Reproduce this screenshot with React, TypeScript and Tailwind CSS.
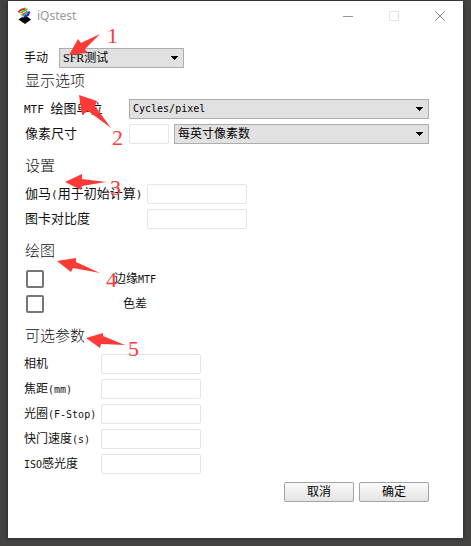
import { ReactNode } from 'react'

interface SelectProps {
    id: string;
    label?: string;
    value: string;
    className: string;
}

interface RowProps {
    id: string;
    label: ReactNode;
    labelWidth: string;
}

const ARROWS = [
    '69,55 78,39 81,43 100,34 85,49 87,53',
    '79,95 97,101 95,106 111,128 88,111 82,115',
    '65,182 82,174 82,179 106,182 82,186 81,190',
    '57,261 76,258 76,262 100,273 73,268 71,272',
    '86,338 103,333 103,336 125,345 101,344 100,348',
]

const NUMBERS = [
    { n: 1, x: 107, y: 43 },
    { n: 2, x: 112, y: 145 },
    { n: 3, x: 110, y: 195 },
    { n: 4, x: 106, y: 287 },
    { n: 5, x: 128, y: 356 },
]

function Latin({ children }: { children: ReactNode }) {
    return <span className="font-['DejaVu_Sans_Mono',monospace] text-[10px]">{children}</span>
}

function LargeLatin({ children }: { children: ReactNode }) {
    return <span className="font-['DejaVu_Sans_Mono',monospace] text-[11px]">{children}</span>
}

function Heading({ children }: { children: ReactNode }) {
    return <h2 className="pl-px text-[15px] leading-5 font-light text-[#111]">{children}</h2>
}

function Select({ id, label, value, className }: SelectProps) {
    return (
        <div className={`relative h-5 ${className}`}>
            <select id={id} aria-label={label} defaultValue={value} className="block h-5 w-full appearance-none border border-[#adadad] bg-[#e1e1e1] pl-[3px] pr-5 leading-4 text-black outline-none">
                <option>{value}</option>
            </select>
            <svg className="pointer-events-none absolute right-[6px] top-2 h-1 w-[7px]" viewBox="0 0 7 4" shapeRendering="crispEdges">
                <path d="M0 0h7v1H6v1H5v1H4v1H3V3H2V2H1V1H0z" fill="#000" />
            </svg>
        </div>
    )
}

function InputRow({ id, label, labelWidth }: RowProps) {
    return (
        <div className="flex h-5 items-center">
            <label htmlFor={id} className={`shrink-0 whitespace-nowrap ${labelWidth}`}>{label}</label>
            <input id={id} type="text" className="h-5 w-[100px] rounded-[2px] border border-[#e5e5e5] bg-white px-1 outline-none" />
        </div>
    )
}

function CheckRow({ id, label }: { id: string; label: ReactNode }) {
    return (
        <div className="flex h-5 items-center gap-10 pl-[2px]">
            <input id={id} type="checkbox" className="size-[18px] shrink-0 appearance-none rounded-[2px] border-2 border-[#767676] bg-white" />
            <label htmlFor={id} className="w-[102px] text-center">{label}</label>
        </div>
    )
}

function TitleBar() {
    return (
        <header className="flex h-[29px] items-center pl-[9px]">
            <svg className="size-[18px]" viewBox="0 0 18 18" fill="none">
                <path d="M8 8 14 12.500 8 17 1.500 12.500z" fill="#000" />
                <path d="M5.500 10 12.500 5.500" stroke="#fff" strokeWidth="1.500" />
                <path d="M1.500 5.500 3.500 3 8.500 1.500" stroke="#f22" strokeWidth="2" />
                <path d="M3.500 6 6 4.500 10.500 2" stroke="#1d3" strokeWidth="1.800" />
                <path d="M4.500 8 7.500 6.500 10.500 4" stroke="#f33" strokeWidth="1.500" />
                <path d="M5.500 9 9.500 7 11.500 5" stroke="#1d3" strokeWidth="1.500" />
                <path d="M7 9.800 11 8 12.500 4.500" stroke="#22f" strokeWidth="2" />
            </svg>
            <h1 className="ml-[2px] flex-1 font-['Noto_Sans',sans-serif] text-xs text-[#999]">iQstest</h1>
            <button aria-label="最小化" className="flex h-[29px] w-[46px] items-center justify-center">
                <svg className="size-[10px]" viewBox="0 0 10 10" shapeRendering="crispEdges">
                    <path d="M0 5h10v1H0z" fill="#999" />
                </svg>
            </button>
            <button aria-label="最大化" className="flex h-[29px] w-[46px] items-center justify-center">
                <svg className="size-[10px]" viewBox="0 0 10 10" fill="none">
                    <path d="M.5.5h9v9h-9z" stroke="#e3e3e3" />
                </svg>
            </button>
            <button aria-label="关闭" className="flex h-[29px] w-[46px] items-center justify-center">
                <svg className="size-[10px]" viewBox="0 0 10 10" fill="none">
                    <path d="m0 0 10 10M10 0 0 10" stroke="#888" />
                </svg>
            </button>
        </header>
    )
}

function Annotations() {
    return (
        <svg className="pointer-events-none absolute left-0 top-0 h-[370px] w-[150px]" viewBox="0 0 150 370">
            {ARROWS.map((points) => <polygon key={points} points={points} fill="#fd3a38" />)}
            {NUMBERS.map(({ n, x, y }) => (
                <text key={n} x={x} y={y} fill="#fd3a38" className="font-['Liberation_Serif',serif] text-[22px]">{n}</text>
            ))}
        </svg>
    )
}

export default function App() {
    const buttonClass = 'h-5 w-[70px] rounded-[2px] border border-[#a3a3a3] bg-linear-to-b from-[#fbfbfb] to-[#e4e4e4] leading-4 text-black'

    return (
        <div className="relative flex min-h-screen flex-col bg-[#454341] px-2 pt-px pb-2 font-['Liberation_Serif','Noto_Sans_CJK_SC',serif] text-xs leading-5 text-[#111]">
            <main className="flex-1 bg-white shadow-[0_0_4px_#222]">
                <TitleBar />
                <form className="pt-[18px] pr-[34px] pb-9 pl-4">
                    <div className="flex items-center">
                        <label htmlFor="mode" className="w-[35px]">手动</label>
                        <Select id="mode" value="SFR测试" className="w-[125px]" />
                    </div>

                    <section className="mt-[3px]">
                        <Heading>显示选项</Heading>
                        <div className="mt-2 flex flex-col gap-[5px]">
                            <div className="flex h-5 items-center">
                                <label htmlFor="unit" className="w-[105px] shrink-0 text-[13px]"><LargeLatin>MTF </LargeLatin>绘图单位</label>
                                <Select id="unit" value="Cycles/pixel" className="flex-1 font-['DejaVu_Sans_Mono',monospace] text-[10px]" />
                            </div>
                            <div className="flex h-5 items-center">
                                <label htmlFor="pixel" className="w-[105px] shrink-0 pl-px text-[13px]">像素尺寸</label>
                                <input id="pixel" type="text" className="mr-[5px] h-5 w-10 rounded-[2px] border border-[#e5e5e5] px-1 outline-none" />
                                <Select id="pixel-unit" label="像素单位" value="每英寸像素数" className="flex-1" />
                            </div>
                        </div>
                    </section>

                    <section className="mt-3">
                        <Heading>设置</Heading>
                        <div className="mt-2 flex flex-col gap-[5px] text-[13px]">
                            <InputRow id="gamma" label={<>伽马<LargeLatin>(</LargeLatin>用于初始计算<LargeLatin>)</LargeLatin></>} labelWidth="w-[123px] pl-px" />
                            <InputRow id="contrast" label="图卡对比度" labelWidth="w-[123px] pl-px" />
                        </div>
                    </section>

                    <section className="mt-3">
                        <Heading>绘图</Heading>
                        <div className="mt-2 flex flex-col gap-[5px]">
                            <CheckRow id="edge" label={<>边缘<Latin>MTF</Latin></>} />
                            <CheckRow id="chroma" label="色差" />
                        </div>
                    </section>

                    <section className="mt-3">
                        <Heading>可选参数</Heading>
                        <div className="mt-2 flex flex-col gap-[5px]">
                            <InputRow id="camera" label="相机" labelWidth="w-[77px]" />
                            <InputRow id="focal" label={<>焦距<Latin>(mm)</Latin></>} labelWidth="w-[77px]" />
                            <InputRow id="aperture" label={<>光圈<Latin>(F-Stop)</Latin></>} labelWidth="w-[77px]" />
                            <InputRow id="shutter" label={<>快门速度<Latin>(s)</Latin></>} labelWidth="w-[77px]" />
                            <InputRow id="iso" label={<><Latin>ISO</Latin>感光度</>} labelWidth="w-[77px]" />
                        </div>
                    </section>

                    <div className="mt-2 flex justify-end gap-[5px]">
                        <button type="button" className={buttonClass}>取消</button>
                        <button type="button" className={buttonClass}>确定</button>
                    </div>
                </form>
            </main>
            <Annotations />
        </div>
    )
}
